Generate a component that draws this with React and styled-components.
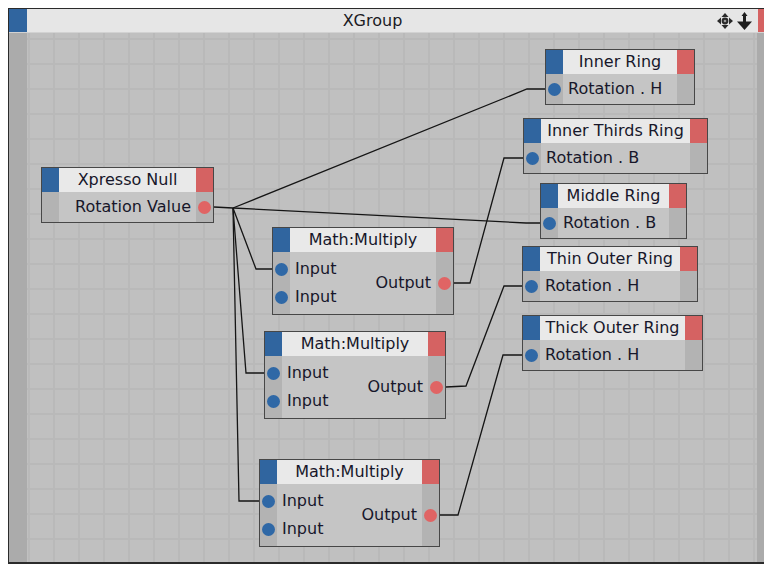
import React from 'react';
import styled, { createGlobalStyle } from 'styled-components';

// canvas origin in page coordinates (nodes below are measured on the page)
const OX = 27;
const OY = 32;
const HEAD = 24;
const ROW = 28;

const nodes = [
  { id: 'null', title: 'Xpresso Null', x: 41, y: 166, w: 173, kind: 'out', label: 'Rotation Value' },
  { id: 'inner', title: 'Inner Ring', x: 545, y: 48, w: 150, kind: 'in', label: 'Rotation . H' },
  { id: 'thirds', title: 'Inner Thirds Ring', x: 523, y: 117, w: 185, kind: 'in', label: 'Rotation . B' },
  { id: 'middle', title: 'Middle Ring', x: 540, y: 182, w: 147, kind: 'in', label: 'Rotation . B' },
  { id: 'thin', title: 'Thin Outer Ring', x: 522, y: 245, w: 176, kind: 'in', label: 'Rotation . H' },
  { id: 'thick', title: 'Thick Outer Ring', x: 522, y: 314, w: 181, kind: 'in', label: 'Rotation . H' },
  { id: 'm1', title: 'Math:Multiply', x: 272, y: 226, w: 182, kind: 'math' },
  { id: 'm2', title: 'Math:Multiply', x: 264, y: 330, w: 182, kind: 'math' },
  { id: 'm3', title: 'Math:Multiply', x: 259, y: 458, w: 181, kind: 'math' },
];

const byId = Object.fromEntries(nodes.map((n) => [n.id, n]));

const bodyPad = (n) => (n.kind === 'math' ? 3 : 1);

const inPort = (id, i = 0) => {
  const n = byId[id];
  return [n.x, n.y + 1 + HEAD + bodyPad(n) + ROW / 2 + ROW * i];
};

const outPort = (id) => {
  const n = byId[id];
  const rows = n.kind === 'math' ? 2 : 1;
  return [n.x + n.w, n.y + 1 + HEAD + bodyPad(n) + (ROW * rows) / 2];
};

// each wire: start, bend points, end
const wires = [
  [outPort('null'), [233, 207]],
  [[233, 207], [527, 88], inPort('inner')],
  [[233, 207], [526, 222], inPort('middle')],
  [[233, 207], [256, 268], inPort('m1')],
  [[233, 207], [246, 372], inPort('m2')],
  [[233, 207], [239, 500], inPort('m3')],
  [outPort('m1'), [470, 282], [504, 157], inPort('thirds')],
  [outPort('m2'), [466, 385], [504, 285], inPort('thin')],
  [outPort('m3'), [458, 514], [503, 354], inPort('thick')],
];

const GlobalStyle = createGlobalStyle`
  html, body {
    margin: 0;
    background: #ffffff;
    overflow: hidden;
  }
  body {
    font-family: "DejaVu Sans", "Liberation Sans", sans-serif;
  }
`;

const Frame = styled.div`
  margin: 8px 0 0 8px;
  width: 772px;
  border: 1px solid #2b2b2b;
  border-bottom-width: 2px;
  border-right: none;
  display: flex;
  flex-direction: column;
`;

const TitleBar = styled.div`
  height: 23px;
  display: grid;
  grid-template-columns: 18px 1fr 40px 23px;
  background: #e6e6e6;
  border-bottom: 1px solid #d2d2d2;
`;

const BlueTab = styled.div`
  background: #30659f;
`;

const RedTab = styled.div`
  background: #d56262;
`;

const Title = styled.div`
  text-align: center;
  font-size: 16px;
  line-height: 23px;
  color: #1b1b24;
`;

const Icons = styled.div`
  display: flex;
  align-items: center;
  gap: 4px;
  margin-left: -1px;
`;

const Body = styled.div`
  height: 529px;
  display: flex;
`;

const Strip = styled.div`
  width: ${(p) => p.$w}px;
  background: #ababab;
  flex: none;
`;

const Canvas = styled.div`
  position: relative;
  width: 730px;
  flex: none;
  overflow: hidden;
  background-color: #c0c0c0;
  background-image:
    linear-gradient(to right, #b9b9b9 0 2px, transparent 2px),
    linear-gradient(to bottom, #b9b9b9 0 2px, transparent 2px);
  background-size: 25px 25px;
  background-position: 1px 5px;
`;

const Wires = styled.svg`
  position: absolute;
  left: 0;
  top: 0;
  width: 730px;
  height: 529px;
  pointer-events: none;
`;

const NodeBox = styled.div`
  position: absolute;
  left: ${(p) => p.$x - OX}px;
  top: ${(p) => p.$y - OY}px;
  width: ${(p) => p.$w}px;
  box-sizing: border-box;
  border: 1px solid #474747;
  background: #c5c5c5;
  font-size: 16px;
  color: #17172a;
`;

const NodeHead = styled.div`
  height: ${HEAD}px;
  display: flex;
`;

const HeadTitle = styled.div`
  flex: 1;
  background: #e9e9e9;
  text-align: center;
  line-height: ${HEAD}px;
  white-space: nowrap;
`;

const Square = styled.div`
  width: 17px;
  flex: none;
  background: ${(p) => (p.$red ? '#d56262' : '#30659f')};
`;

const NodeBody = styled.div`
  display: flex;
`;

const PortCol = styled.div`
  width: 17px;
  flex: none;
  background: #b3b3b3;
  display: flex;
  flex-direction: column;
  justify-content: center;
  padding: ${(p) => p.$pad}px 0;
`;

const PortCell = styled.div`
  height: ${ROW}px;
  display: flex;
  align-items: center;
  justify-content: center;
`;

const Dot = styled.span`
  width: 13px;
  height: 13px;
  border-radius: 50%;
  background: ${(p) => (p.$out ? '#e06464' : '#2f68a6')};
`;

const Labels = styled.div`
  flex: 1;
  display: flex;
  justify-content: ${(p) => (p.$right ? 'flex-end' : 'space-between')};
  align-items: center;
  padding: ${(p) => p.$pad}px 5px;
`;

const LabelList = styled.div`
  display: flex;
  flex-direction: column;
`;

const Label = styled.div`
  height: ${ROW}px;
  line-height: ${ROW}px;
  white-space: nowrap;
`;

const MoveIcon = () => (
  <svg width="16" height="16" viewBox="0 0 16 16">
    <path d="M8 0 L11.5 4 L4.5 4 Z M8 16 L11.5 12 L4.5 12 Z M0 8 L4 4.5 L4 11.5 Z M16 8 L12 4.5 L12 11.5 Z" fill="#2a2a2a" />
    <circle cx="8" cy="8" r="3.4" fill="#2a2a2a" />
    <circle cx="8" cy="8" r="1.3" fill="#9a9a9a" />
  </svg>
);

const UpDownIcon = () => (
  <svg width="15" height="18" viewBox="0 0 15 18">
    <path d="M7.5 0 L10.5 4 L4.5 4 Z" fill="#1e1e1e" />
    <rect x="6" y="3.5" width="3" height="7" fill="#1e1e1e" />
    <path d="M0 9.5 L15 9.5 L7.5 18 Z" fill="#1e1e1e" />
  </svg>
);

const Node = ({ node }) => {
  const pad = bodyPad(node);
  const math = node.kind === 'math';
  return (
    <NodeBox $x={node.x} $y={node.y} $w={node.w}>
      <NodeHead>
        <Square />
        <HeadTitle>{node.title}</HeadTitle>
        <Square $red />
      </NodeHead>
      <NodeBody>
        <PortCol $pad={pad}>
          {node.kind !== 'out' &&
            (math ? [0, 1] : [0]).map((i) => (
              <PortCell key={i}>
                <Dot />
              </PortCell>
            ))}
        </PortCol>
        {math ? (
          <Labels $pad={pad}>
            <LabelList>
              <Label>Input</Label>
              <Label>Input</Label>
            </LabelList>
            <Label>Output</Label>
          </Labels>
        ) : (
          <Labels $pad={pad} $right={node.kind === 'out'}>
            <Label>{node.label}</Label>
          </Labels>
        )}
        <PortCol $pad={pad}>
          {node.kind !== 'in' && (
            <PortCell>
              <Dot $out />
            </PortCell>
          )}
        </PortCol>
      </NodeBody>
    </NodeBox>
  );
};

const App = () => {
  return (
    <>
      <GlobalStyle />
      <Frame>
        <TitleBar>
          <BlueTab />
          <Title>XGroup</Title>
          <Icons>
            <MoveIcon />
            <UpDownIcon />
          </Icons>
          <RedTab />
        </TitleBar>
        <Body>
          <Strip $w={18} />
          <Canvas>
            <Wires viewBox="0 0 730 529">
              {wires.map((pts, i) => (
                <polyline
                  key={i}
                  points={pts.map(([x, y]) => `${x - OX},${y - OY}`).join(' ')}
                  fill="none"
                  stroke="#151515"
                  strokeWidth="1.3"
                />
              ))}
            </Wires>
            {nodes.map((n) => (
              <Node key={n.id} node={n} />
            ))}
          </Canvas>
          <Strip $w={24} />
        </Body>
      </Frame>
    </>
  );
};

export default App;
